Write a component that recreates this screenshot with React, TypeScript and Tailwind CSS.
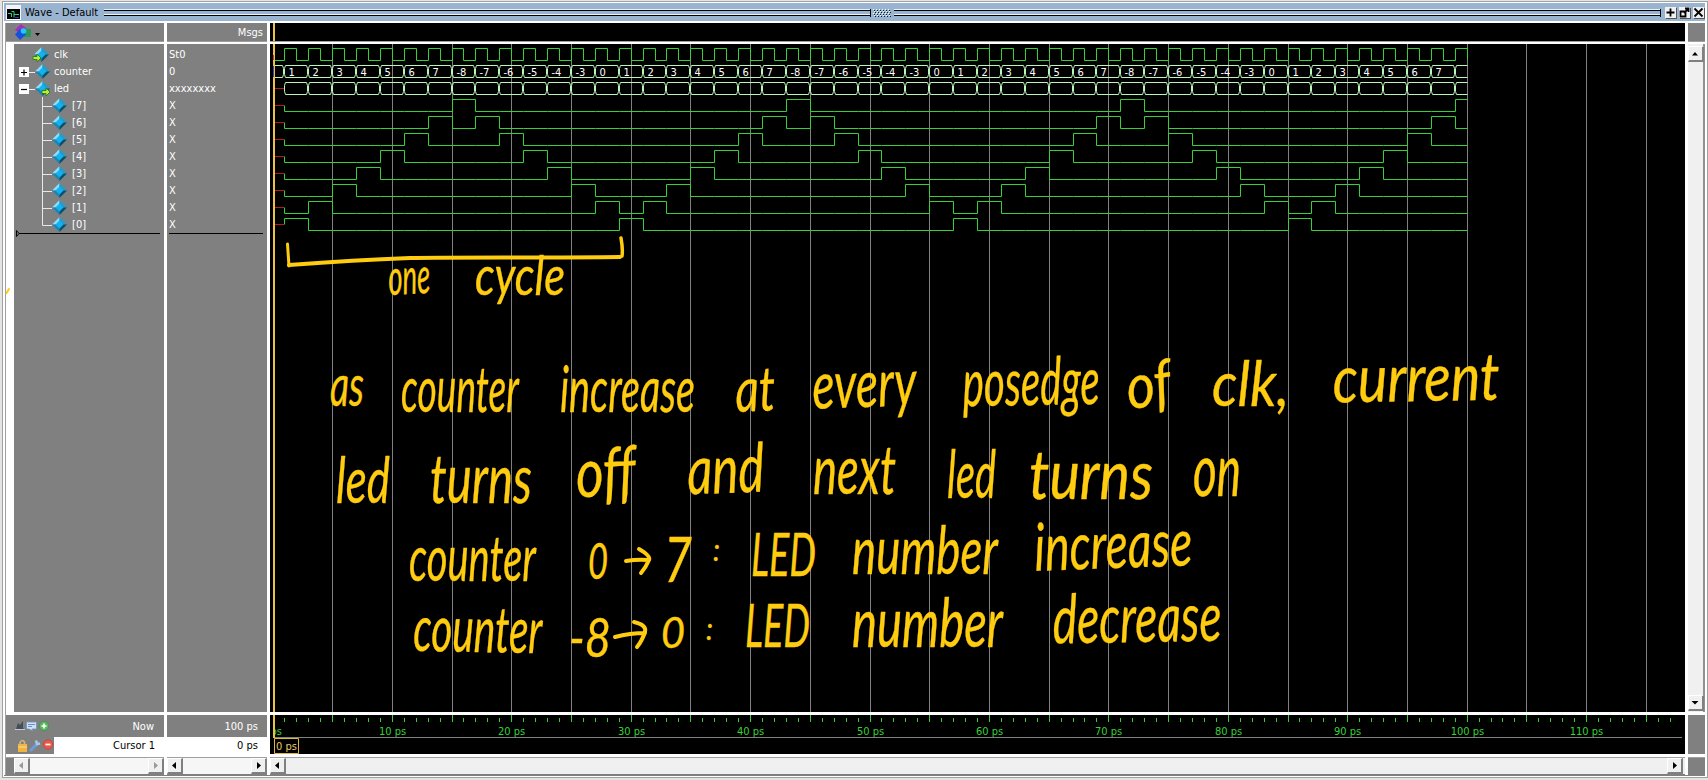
import React from 'react';

const VALUES = ['1', '2', '3', '4', '5', '6', '7', '-8', '-7', '-6', '-5', '-4', '-3', '0'];
const BITS = [7, 6, 5, 4, 3, 2, 1, 0];
const GREEN = '#37d037';
const BUS = '#b9f7b9';
const YELLOW = '#ffcc0f';

/* Horizontal position, inside the wave pane, of a time in picoseconds. */
const tx = (t: number) => Math.floor(2.86 + 11.943 * t) + 0.5;

const ledHigh = (bit: number, slot: number) => {
  const k = slot % 14;
  return k === bit || (bit > 0 && k === 14 - bit);
};

function clockPath() {
  let d = `M4 16.5H${tx(1)}`;
  for (let t = 1; t < 100; t += 2) {
    d += `V4.5H${tx(t + 1)}V16.5`;
    if (t < 99) d += `H${tx(t + 2)}`;
  }
  return d;
}

function bitPath(bit: number, row: number) {
  const hi = 4.5 + row * 17;
  const lo = hi + 12;
  let d = `M${tx(1)} ${hi + 6}`;
  for (let k = 0; k < 50; k++) {
    d += `V${ledHigh(bit, k) ? hi : lo}H${tx(Math.min(100, 3 + 2 * k))}`;
  }
  return d;
}

function busPath(top: number, first: boolean) {
  const b = top + 12;
  let d = first ? `M3 ${top}H${tx(1) - 2}L${tx(1) - 1} ${top + 3}V${b - 3}L${tx(1) - 2} ${b}H3` : '';
  for (let k = 0; k < 50; k++) {
    const s = tx(1 + 2 * k);
    const e = tx(Math.min(100, 3 + 2 * k));
    if (k === 49) {
      d += `M${e} ${top}H${s + 1}L${s} ${top + 3}V${b - 3}L${s + 1} ${b}H${e}`;
    } else {
      d += `M${s + 1} ${top}H${e - 2}L${e - 1} ${top + 3}V${b - 3}L${e - 2} ${b}H${s + 1}L${s} ${b - 3}V${top + 3}Z`;
    }
  }
  return d;
}

function Waves() {
  const grid = Array.from({ length: 23 }, (_, i) => (i + 1) * 5);
  return (
    <svg width="1415" height="668" className="block bg-black" fill="none">
      {grid.map((t) => (
        <path key={t} d={`M${tx(t)} 0V668`} stroke="#808080" />
      ))}
      <path d={clockPath()} stroke={GREEN} />
      <path d={busPath(21.5, true)} stroke={BUS} />
      <path d={busPath(38.5, false)} stroke={BUS} />
      {Array.from({ length: 49 }, (_, k) => (
        <text key={k} x={tx(1 + 2 * k) + 4} y="31.5" fill="#fff" fontSize="11">
          {VALUES[k % 14]}
        </text>
      ))}
      {BITS.map((b, i) => (
        <path key={b} d={bitPath(b, i + 3)} stroke={GREEN} />
      ))}
      {Array.from({ length: 9 }, (_, i) => (
        <path key={i} d={`M4 ${44.5 + i * 17}H14`} stroke="#b01c1c" />
      ))}
      <path d="M4 0V668" stroke="#ecc040" strokeWidth="2" />
      <path d="M3.5 11V16" stroke="#d03020" />
      <path d="M3.5 22V33" stroke="#4040a0" />
    </svg>
  );
}

function Ruler() {
  return (
    <svg width="1415" height="39" className="block bg-black" fill="none">
      {Array.from({ length: 117 }, (_, i) => i + 1).map((t) => (
        <path key={t} d={`M${tx(t)} ${t % 5 ? 3 : 0}V7`} stroke={GREEN} />
      ))}
      {Array.from({ length: 11 }, (_, i) => (i + 1) * 10).map((t) => (
        <text key={t} x={tx(t)} y="20" textAnchor="middle" fill={GREEN} fontSize="11">
          {t} ps
        </text>
      ))}
      <text x="0.5" y="20" fill={GREEN} fontSize="11">
        ps
      </text>
      <path d="M0 0H3V39H0Z" fill="#000" />
      <path d="M4 22.5H1412" stroke="#808080" />
      <path d="M4 0V23" stroke="#ecc040" strokeWidth="2" />
      <path d="M4.5 23.5H28.5V38.5H4.5Z" stroke="#e0b838" />
      <text x="6" y="35" fill="#e8c868" fontSize="11">
        0 ps
      </text>
    </svg>
  );
}

type Word = [text: string, x: number, right: number, baseline: number, size: number, tilt?: number];
const WORDS: Word[] = [
  ['one', 389, 431, 294, 50, -3],
  ['cycle', 475, 565, 295, 54, 0],
  ['as', 330, 364, 406, 58, 0],
  ['counter', 401, 519, 412, 64, 0],
  ['increase', 560, 695, 412, 64, 0],
  ['at', 736, 776, 411, 62, -2],
  ['every', 813, 917, 407, 66, -2],
  ['posedge', 963, 1100, 405, 66, -1],
  ['of', 1129, 1174, 406, 62, -8],
  ['clk,', 1212, 1289, 406, 62, 0],
  ['current', 1333, 1500, 401, 66, -1],
  ['led', 336, 390, 503, 64, 0],
  ['turns', 430, 532, 503, 68, 0],
  ['off', 577, 637, 496, 68, -3],
  ['and', 688, 765, 493, 68, -2],
  ['next', 813, 896, 494, 68, 0],
  ['led', 947, 996, 498, 66, 0],
  ['turns', 1029, 1153, 499, 68, 0],
  ['on', 1193, 1241, 496, 72, 0],
  ['counter', 409, 536, 581, 64, 0],
  ['0', 588, 608, 579, 50, 0],
  ['7', 664, 692, 582, 62, 0],
  [':', 713, 720, 561, 30, 0],
  ['LED', 751, 816, 576, 60, 0],
  ['number', 852, 998, 574, 66, 0],
  ['increase', 1035, 1193, 568, 66, -2],
  ['counter', 413, 542, 652, 64, 1],
  ['-8', 569, 611, 657, 54, 0],
  ['0', 661, 685, 648, 43, 0],
  [':', 706, 713, 640, 30, 0],
  ['LED', 745, 810, 647, 60, 0],
  ['number', 852, 1003, 647, 68, 0],
  ['decrease', 1053, 1222, 642, 68, -1],
];

function Annotations() {
  return (
    <svg width="1708" height="780" className="pointer-events-none absolute inset-0" fill="none" stroke={YELLOW} strokeLinecap="round" strokeLinejoin="round">
      <path d="M287.500 244L289 266" strokeWidth="3" />
      <path d="M289 265C340 261 380 259 410 258S560 258 620 257" strokeWidth="4" />
      <path d="M621 238Q623 249 622 256" strokeWidth="3.5" />
      <path d="M6.500 293L9 289" strokeWidth="2" />
      <path d="M626 561Q638 559 648 560M639 549Q651 556 649 560Q646 567 641 573" strokeWidth="4" />
      <path d="M615 637Q630 633 645 633M634 622Q647 625 645 632Q642 641 637 647" strokeWidth="4" />
      {WORDS.map(([text, x, right, y, size, tilt = 0], i) => (
        <text
          key={i}
          x={x}
          y={y}
          fontSize={size}
          textLength={right - x}
          lengthAdjust="spacingAndGlyphs"
          transform={`rotate(${tilt} ${(x + right) / 2} ${y})`}
          fill={YELLOW}
          strokeWidth="0.4"
          className="font-['Lato',sans-serif] italic"
        >
          {text}
        </text>
      ))}
    </svg>
  );
}

function Diamond({ arrow }: { arrow?: 'in' | 'out' }) {
  return (
    <svg width="15" height="15" viewBox="0 0 15 15" className="block shrink-0 overflow-visible">
      <path d="M7.500 0L0 7.500H7.500Z" fill="#8fdcf8" />
      <path d="M7.500 0L15 7.500H7.500Z" fill="#1c9fd0" />
      <path d="M0 7.500L7.500 15V7.500Z" fill="#1687b8" />
      <path d="M15 7.500L7.500 15V7.500Z" fill="#08506e" />
      <path d="M7.500 3.500L11.500 7.500L7.500 11.500L3.500 7.500Z" fill="#12b2ee" />
      {arrow && (
        <path
          transform={arrow === 'in' ? 'translate(-1 7)' : 'translate(7 7)'}
          d="M0 2.500H4V0L8 4L4 8V5.500H0Z"
          fill="#b6ee38"
          stroke="#2d7a1c"
          strokeWidth="0.9"
        />
      )}
    </svg>
  );
}

function Toggle({ open }: { open: boolean }) {
  return (
    <svg width="16" height="10" className="block shrink-0">
      <path d="M0 0H10V10H0Z" fill="#fff" />
      <path d={open ? 'M2 5.5H8' : 'M2 5.5H8M5 2.5V8.5'} stroke="#000" strokeWidth="1.2" />
      <path d="M10 5.500H16" stroke="#eee" />
    </svg>
  );
}

function TreeLine({ last }: { last: boolean }) {
  return (
    <svg width="10" height="17" className="block shrink-0">
      <path d={last ? 'M0.5 0V9.5H10' : 'M0.5 0V17M0.5 9.5H10'} stroke="#e8e8e8" fill="none" />
    </svg>
  );
}

function Arrow({ dir, dim }: { dir: 'l' | 'r' | 'u' | 'd'; dim?: boolean }) {
  const d = { l: 'M6 1V8L2 4.5Z', r: 'M3 1V8L7 4.5Z', u: 'M1 6.5H7L4 3Z', d: 'M0.5 3H7.5L4 6.5Z' }[dir];
  return (
    <span className="flex size-4 shrink-0 items-center justify-center border-t border-r-2 border-b-2 border-l border-t-white border-r-[#808080] border-b-[#808080] border-l-white bg-[#f0f0f0]">
      <svg width="9" height="9">
        <path d={d} fill={dim ? '#999' : '#000'} />
      </svg>
    </span>
  );
}

function TitleButton({ d }: { d: string }) {
  return (
    <span className="flex size-[11px] items-center justify-center bg-[#f0f0f0] shadow-[1px_1px_0_#555]">
      <svg width="11" height="11" fill="none" stroke="#000" strokeWidth="1.8">
        <path d={d} />
      </svg>
    </span>
  );
}

function GripLines() {
  return (
    <div className="mt-0.5 h-2 flex-1 border-r border-black bg-[linear-gradient(#e4f2fb_0_1px,#000_1px_2px,#99b4d1_2px_5px,#e4f2fb_5px_6px,#000_6px_7px,#99b4d1_7px)]" />
  );
}

function TitleBar() {
  return (
    <header className="flex h-[18px] shrink-0 items-center bg-[#99b4d1] pl-0.5">
      <svg width="15" height="15" className="shrink-0">
        <path d="M0 0H15V15H0Z" fill="#f4f4f4" />
        <path d="M1 4H14V14H1Z" fill="#000" />
        <path d="M2 8.500H5.500V12M5.500 6.500H8M8 12.500V6.500M8 9.500H13" stroke="#30d088" fill="none" />
        <path d="M9 12.500H13" stroke="#3040b0" />
      </svg>
      <span className="ml-1 w-[79px] whitespace-pre">Wave - Default</span>
      <GripLines />
      <svg width="23" height="9" className="mt-0.5 shrink-0">
        {[0, 1, 2, 3].map((r) =>
          [0, 1, 2, 3, 4, 5].map((c) => (
            <path
              key={`${r}${c}`}
              d={`M${2 + c * 3 + (r % 2)} ${0.5 + r * 2}h1`}
              stroke="#fff"
            />
          )),
        )}
        {[0, 1, 2, 3].map((r) =>
          [0, 1, 2, 3, 4, 5].map((c) => (
            <path key={`${r}${c}`} d={`M${3 + c * 3 + (r % 2)} ${1.5 + r * 2}h1`} stroke="#10202c" />
          )),
        )}
      </svg>
      <GripLines />
      <div className="ml-1 flex gap-[3px] pr-px">
        <TitleButton d="M1.5 5.5H9.5M5.5 1.5V9.5" />
        <TitleButton d="M1.5 4.5H6.5V9.5H1.5ZM5 6L9.5 1.5M6 1.5H9.5V5" />
        <TitleButton d="M1.5 1.5L9.5 9.5M9.5 1.5L1.5 9.5" />
      </div>
    </header>
  );
}

function HScroll({ dim }: { dim?: boolean }) {
  return (
    <div className="flex h-4 w-full justify-between bg-[#f6f6f6]">
      <Arrow dir="l" dim={dim} />
      <Arrow dir="r" dim={dim} />
    </div>
  );
}

const Head = 'h-[18px] shrink-0';
const Rule = 'h-[3px] shrink-0 border-t border-t-[#a0a0a0] bg-white';

function NamesColumn() {
  return (
    <section className="flex w-[158px] flex-col text-white">
      <div className={`${Head} flex items-center pl-[9px]`}>
        <svg width="28" height="17">
          <path d="M6 0L12 5L6 10L0 6Z" fill="#a030b8" />
          <path d="M9 5H16V13H9Z" fill="#28985c" />
          <path d="M5 5L11 10.500L5 16L0 10.500Z" fill="#1450e0" />
          <circle cx="8.500" cy="7" r="2.800" fill="#20c8f8" />
          <path d="M20 9H25L22.500 12Z" fill="#000" />
        </svg>
      </div>
      <div className={Rule} />
      <div className="flex h-[668px] shrink-0">
        <div className="w-2 bg-white" />
        <div className="flex flex-1 flex-col pt-[2px]">
          <div className="flex h-[17px] items-center pl-5">
            <Diamond arrow="in" />
            <span className="ml-[5px]">clk</span>
          </div>
          <div className="flex h-[17px] items-center pl-[5px]">
            <Toggle open={false} />
            <Diamond />
            <span className="ml-1">counter</span>
          </div>
          <div className="flex h-[17px] items-center pl-[5px]">
            <Toggle open />
            <Diamond arrow="out" />
            <span className="ml-1">led</span>
          </div>
          {BITS.map((b) => (
            <div key={b} className="flex h-[17px] items-center pl-7">
              <TreeLine last={b === 0} />
              <Diamond />
              <span className="ml-[5px]">[{b}]</span>
            </div>
          ))}
          <svg width="146" height="8" className="ml-0.5 overflow-visible" fill="none" stroke="#000">
            <path d="M0.500 -2.500V3.500L3 0.500ZM3 0.500H144" />
          </svg>
        </div>
      </div>
      <div className="h-[3px] shrink-0 bg-white" />
      <div className="flex h-[22px] shrink-0 items-center pl-[9px] pr-[10px]">
        <svg width="35" height="12">
          <path d="M1 9L3 3L5 5L8 1V8L10 10H1Z" fill="#444c54" />
          <path d="M0 9.500H10" stroke="#b8cde0" />
          <path d="M11.500 2H21.500V9H17L18 11L14 9H11.500Z" fill="#cfe1f4" stroke="#6c90bd" strokeWidth="0.8" />
          <path d="M13 4.500H20M13 6.500H17" stroke="#6c90bd" />
          <circle cx="29" cy="6" r="4.700" fill="#5cb860" stroke="#388c40" strokeWidth="0.600" />
          <path d="M26.500 6H31.500M29 3.500V8.500" stroke="#fff" strokeWidth="1.600" />
        </svg>
        <span className="ml-auto">Now</span>
      </div>
      <div className="flex h-[17px] shrink-0">
        <svg width="48" height="17" className="shrink-0">
          <path d="M14 7V5.500Q16 2 18.500 5V8" stroke="#d8b878" fill="none" strokeWidth="1.500" />
          <path d="M12 7H21V15H12Z" fill="#f0b440" />
          <path d="M12 10H21" stroke="#fbdc90" />
          <path d="M25 13L31 7" stroke="#6c9cd8" strokeWidth="3" strokeLinecap="round" />
          <path d="M30 3.500L31 7L34 6.500" stroke="#a8c8ec" strokeWidth="2.500" fill="none" />
          <circle cx="42" cy="7.500" r="4.800" fill="#e85848" stroke="#c83830" strokeWidth="0.600" />
          <path d="M39.500 7.500H44.500" stroke="#fff" strokeWidth="1.700" />
        </svg>
        <div className="flex flex-1 items-center justify-end bg-white pr-[9px] text-black">Cursor 1</div>
      </div>
      <div className="h-1 shrink-0 border-b border-b-[#a0a0a0] bg-white" />
      <div className="flex h-4 shrink-0 pl-2">
        <HScroll dim />
      </div>
    </section>
  );
}

function ValuesColumn() {
  const values = ['St0', '0', 'xxxxxxxx', 'X', 'X', 'X', 'X', 'X', 'X', 'X', 'X'];
  return (
    <section className="ml-[3px] flex w-[100px] flex-col text-white">
      <div className={`${Head} flex items-center justify-end pr-[4px]`}>Msgs</div>
      <div className={Rule} />
      <div className="flex h-[668px] shrink-0 flex-col pt-[2px] pl-0.5">
        {values.map((v, i) => (
          <div key={i} className="flex h-[17px] items-center">
            {v}
          </div>
        ))}
        <div className="h-px w-[94px] bg-black" />
      </div>
      <div className="h-[3px] shrink-0 bg-white" />
      <div className="flex h-[22px] shrink-0 items-center justify-end pr-[9px]">100 ps</div>
      <div className="flex h-[17px] shrink-0 items-center justify-end bg-white pr-[9px] text-black">0 ps</div>
      <div className="h-1 shrink-0 border-b border-b-[#a0a0a0] bg-white" />
      <div className="flex h-4 shrink-0">
        <HScroll />
      </div>
    </section>
  );
}

function WaveColumn() {
  return (
    <section className="ml-[3px] flex w-[1415px] flex-col">
      <div className={`${Head} bg-black pl-[3px]`}>
        <div className="h-full w-0.5 bg-[#ecc040]" />
      </div>
      <div className={Rule} />
      <Waves />
      <div className="h-[3px] shrink-0 bg-white" />
      <Ruler />
      <div className="h-1 shrink-0 border-b border-b-[#a0a0a0] bg-white" />
      <div className="flex h-4 shrink-0 justify-between bg-[#f0f0f0] pr-[2px]">
        <Arrow dir="l" />
        <Arrow dir="r" />
      </div>
    </section>
  );
}

function ScrollColumn() {
  return (
    <aside className="ml-[3px] flex w-[17px] flex-col">
      <div className={Head} />
      <div className={Rule} />
      <div className="flex h-[668px] shrink-0 flex-col justify-between border-r-2 border-r-[#909090] bg-[#f0f0f0] pt-[2px] pb-px">
        <Arrow dir="u" />
        <Arrow dir="d" />
      </div>
      <div className="h-[3px] shrink-0 bg-white" />
      <div className="h-[39px] shrink-0" />
      <div className="h-1 shrink-0 border-b border-b-[#a0a0a0] bg-white" />
      <div className="h-4 shrink-0" />
    </aside>
  );
}

export default function App() {
  return (
    <main className="relative h-[780px] w-[1708px] overflow-hidden bg-[#e4e4e4] pt-px pl-0.5 font-['DejaVu_Sans_Condensed','DejaVu_Sans',sans-serif] text-[11px] leading-[13px] [font-stretch:condensed]">
      <div className="flex h-[777px] w-[1706px] flex-col border border-[#a0a0a0] bg-white pt-px pr-0.5 pl-px">
        <TitleBar />
        <div className="mt-0.5 flex h-[753px] border-b border-b-[#808080] bg-white">
          <div className="w-0.5 border-r border-r-[#a0a0a0] bg-white" />
          <div className="flex bg-white [&>*]:bg-[#808080]">
            <NamesColumn />
            <ValuesColumn />
            <WaveColumn />
            <ScrollColumn />
          </div>
        </div>
      </div>
      <Annotations />
    </main>
  );
}
